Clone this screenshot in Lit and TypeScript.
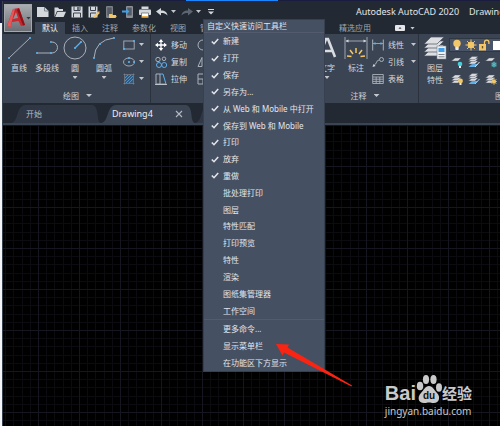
import { LitElement, html, css, svg, nothing } from "lit";
import { customElement, state } from "lit/decorators.js";

const INK = "#d4d7db";
const LINE = "#a9b0ba";
const BLUE = "#5fb0ea";
const GOLD = "#f3c767";

const dot = (x: number, y: number) => svg`<rect x=${x - 0.9} y=${y - 0.9} width="1.8" height="1.8" fill=${BLUE} />`;

const floppy = svg`
  <path d="M0.5 0.5H11.5V11.5H0.5Z" fill=${INK} />
  <path d="M3 0.5V4.5H9V0.5M2.5 11.5V7H9.5V11.5" fill="none" stroke="#3a414c" />
  <path d="M7 1V4" stroke="#3a414c" stroke-width="1.4" />`;

const quickIcons = [
  { name: "新建", art: svg`<path d="M0 1H7.5L11.500 5V11H0Z" fill=${INK} /><path d="M7.500 1V5H11.500" fill="none" stroke="#6d747f" stroke-width=".8" />` },
  { name: "打开", art: svg`<path d="M0.500 11V1.500H4L5.200 3H9V5H3Z" fill=${INK} /><path d="M3.500 5.800H12L9.600 11H1.200Z" fill=${INK} />` },
  { name: "保存", art: floppy },
  { name: "另存为", art: svg`<path d="M0.500 0.500H9.500V11.500H0.500Z" fill=${INK} /><path d="M2.500 .5V4.500H7.500V.5M2.500 11.500V7H8" fill="none" stroke="#3a414c" /><path d="M5 11L10 5.500L11.800 7L7 12Z" fill=${GOLD} /><path d="M10 5.500L11 4.400L12 6L11.600 7Z" fill="#e05a4a" />` },
  { name: "从 Web 和 Mobile 中打开", art: svg`<rect x="1" width="7" height="12" rx="1" fill="#7b8088" /><rect x="2.300" y="1.500" width="4.400" height="8" fill="#555b65" /><path d="M4 12V8H7L8 9H11V10L12 9.800L10.500 12Z" fill=${GOLD} />` },
  { name: "保存到 Web 和 Mobile", art: svg`<rect x="4" width="7" height="12" rx="1" fill="#8b9098" /><rect x="5.300" y="1.500" width="4.400" height="8" fill="#555b65" /><path d="M0 4.500H4V2.500L7.500 5.500L4 8.500V6.500H0Z" fill="#43a0e6" />` },
  { name: "打印", art: svg`<path d="M2.500 0.500H9.500V3H2.500Z" fill=${INK} /><rect y="3.500" width="12" height="5.500" rx=".8" fill=${INK} /><path d="M2.500 7H9.500V11.500H2.500Z" fill="#fff" stroke="#59606b" stroke-width=".7" /><rect x="3" y="10" width="6" height="1.500" fill="#efb44e" />` },
];

const bulb = svg`<circle cx="6" cy="4.400" r="3.700" fill=${GOLD} /><rect x="4.300" y="7.800" width="3.400" height="3.200" rx=".8" fill="#e8eaed" />`;
const sun = svg`<circle cx="6" cy="6" r="3.300" fill=${GOLD} /><path d="M6 0.500V11.500M0.500 6H11.500M2.100 2.100L9.900 9.900M9.900 2.100L2.100 9.900" stroke=${GOLD} stroke-width="1" />`;
const lock = svg`<rect x="0" y="5" width="7" height="6.500" fill=${GOLD} /><path d="M5.500 5V3.300A2.200 2.200 0 0 1 9.900 3.300V5" fill="none" stroke=${GOLD} stroke-width="1.300" /><rect x="2.800" y="7" width="1.400" height="2.400" fill="#6b5422" />`;

const sheet = (y: number) => svg`<path d=${`M4 ${y}H10L7 ${y + 3}H0.500Z`} fill="#d9dbde" stroke="#4a5260" stroke-width=".4" />`;
const stack = svg`${sheet(7)}${sheet(4.5)}${sheet(2)}`;
const layerTools = [
  { name: "关闭图层", art: svg`${sheet(2)}<circle cx="9" cy="8" r="2.300" fill="#45d0dc" /><rect x="8" y="10" width="2" height="2" fill="#e8eaed" />` },
  { name: "置为当前", art: svg`<path d="M4 8H10L7 11H.5Z" fill=${BLUE} />${sheet(5)}${sheet(2.5)}${sheet(0.5)}<path d="M7 11L11.500 6" stroke="#e8eaed" />` },
  { name: "冻结图层", art: svg`${sheet(2)}<circle cx="9" cy="8.500" r="2.600" fill="#3f939c" /><path d="M9 5.500V11.500M6.500 7L11.500 10M11.500 7L6.500 10" stroke="#6fc3c9" stroke-width=".6" />` },
  { name: "打开所有图层", art: svg`${stack}<circle cx="9.500" cy="8" r="2.400" fill=${GOLD} /><rect x="8.500" y="10" width="2" height="2" fill="#e8eaed" />` },
  { name: "匹配图层", art: svg`<path d="M4 8H10L7 11H.5Z" fill=${BLUE} />${sheet(5)}${sheet(2.5)}${sheet(0.5)}<path d="M7 11L11.500 6" stroke="#9ccbf0" />` },
  { name: "解冻所有图层", art: svg`${stack}<circle cx="9" cy="8.500" r="2" fill=${GOLD} /><path d="M9 5V12M5.500 8.500H12M6.500 6L11.500 11M11.500 6L6.500 11" stroke=${GOLD} stroke-width=".7" />` },
];

const drawTools = [
  { name: "直线", drop: false, art: svg`<path d="M2 22L23 2" stroke=${LINE} />${dot(2, 22)}${dot(23, 2)}` },
  { name: "多段线", drop: false, art: svg`<path d="M2 17H17A5.500 5.500 0 0 0 17 6" fill="none" stroke=${LINE} />${dot(2, 17)}${dot(16, 17)}${dot(16, 6)}` },
  { name: "圆", drop: true, art: svg`<circle cx="12" cy="12" r="11" fill="none" stroke=${LINE} /><path d="M12 12L18 6" stroke=${BLUE} stroke-width="1.200" />${dot(12, 12)}${dot(18, 6)}` },
  { name: "圆弧", drop: true, art: svg`<path d="M2 22Q3 4 22 2" fill="none" stroke=${LINE} />${dot(2, 22)}${dot(8, 8)}${dot(22, 2)}` },
];

const shapeTools = [
  { name: "矩形", art: svg`<rect x=".8" y="2" width="10.400" height="8" fill="none" stroke=${LINE} stroke-width=".9" />${dot(1, 10)}${dot(11, 2)}` },
  { name: "椭圆", art: svg`<ellipse cx="6" cy="6" rx="5.500" ry="4" fill="none" stroke=${LINE} stroke-width=".9" />${dot(6, 6)}${dot(6, 2)}${dot(11, 6)}` },
  { name: "图案填充", art: svg`<rect x="2" y="2" width="8" height="8" fill="#33597f" /><path d="M2 5L5 2M2 8L8 2M3 10L10 3M6 10L10 6" stroke="#5c9fd6" stroke-width=".8" /><path d="M0.500 1.500H11.500M.5 10.500H11.500M1.500 .5V11.500M10.500 .5V11.500" stroke="#7d8591" stroke-width=".7" />` },
];

const modifyTools = [
  { name: "移动", art: svg`<path d="M6 1V11M1 6H11" stroke="#fff" stroke-width="1.300" /><path d="M6 0L8.300 3H3.700ZM6 12L8.300 9H3.700ZM0 6L3 3.700V8.300ZM12 6L9 3.700V8.300Z" fill="#fff" />` },
  { name: "复制", art: svg`<g fill="none" stroke-width="1"><circle cx="3" cy="3.500" r="2.200" stroke=${LINE} /><circle cx="9" cy="2.800" r="1.800" stroke=${LINE} /><circle cx="4" cy="9" r="2.500" stroke=${BLUE} /><circle cx="9.200" cy="9" r="2.500" stroke=${BLUE} /></g>` },
  { name: "拉伸", art: svg`<path d="M1 11V1H5V11Z" fill="none" stroke=${LINE} /><path d="M5 1L8 1L11 11H5" fill="none" stroke=${BLUE} /><path d="M0 11.500H12" stroke=${INK} stroke-width=".8" />` },
];

const modifyMore = [
  { name: "旋转", art: svg`<path d="M9 2A5 5 0 1 0 11 6" fill="none" stroke=${LINE} />` },
  { name: "镜像", art: svg`<path d="M1 10.500L5 1.500V10.500ZM11 10.500L7 1.500V10.500Z" fill="none" stroke=${LINE} />` },
  { name: "缩放", art: svg`<path d="M1 1H11V11H1ZM1 6H6V11" fill="none" stroke=${LINE} />` },
];

const noteTools = [
  { name: "线性", drop: true, art: svg`<path d="M.7 .5V11.500M11.300 .5V11.500" stroke=${LINE} /><path d="M1 4.500H11" stroke=${BLUE} />${dot(3, 4.5)}${dot(9, 4.5)}` },
  { name: "引线", drop: true, art: svg`<circle cx="9.500" cy="3.500" r="2" fill="none" stroke=${LINE} /><path d="M7.500 3.800C4 4 5 8 2 9.500" fill="none" stroke=${LINE} /><path d="M0.500 11L1.500 8L3.600 10Z" fill=${INK} />` },
  { name: "表格", drop: false, art: svg`<path d="M.7 1.500H11.300V10.500H.7ZM.7 4H11.300M.7 6.200H11.300M.7 8.400H11.300M4.200 4V10.500M7.800 4V10.500" fill="none" stroke=${LINE} stroke-width=".9" />` },
];

const commands = [
  "新建", "打开", "保存", "另存为...", "从 Web 和 Mobile 中打开", "保存到 Web 和 Mobile", "打印", "放弃", "重做",
  "批处理打印", "图层", "特性匹配", "打印预览", "特性", "渲染", "图纸集管理器", "工作空间",
];
const extras = ["更多命令...", "显示菜单栏", "在功能区下方显示"];
const ribbonTabs = ["默认", "插入", "注释", "参数化", "视图", "管理"];

const icon = (art: unknown, size = 12) => html`<svg class="icon" width=${size} height=${size} viewBox="0 0 ${size} ${size}" aria-hidden="true">${art}</svg>`;
const caret = html`<span class="caret"></span>`;

@customElement("app-root")
export class AppRoot extends LitElement {
  @state() private tab = "默认";
  @state() private checked = new Set(commands.slice(0, 9));

  static styles = css`
    :host {
      display: block;
      position: relative;
      min-height: 100vh;
      overflow: hidden;
      background: linear-gradient(#1b1d40 23px, #f4f5f7 23px);
      color: #d6d9de;
      font: 8px/12px "Noto Sans", "Noto Sans CJK SC", sans-serif;
    }
    * { box-sizing: border-box; }
    button {
      margin: 0;
      padding: 0;
      border: 0;
      background: none;
      color: inherit;
      font: inherit;
      white-space: nowrap;
      flex: none;
    }
    .icon { display: block; flex: none; overflow: visible; }
    .caret {
      flex: none;
      width: 5px;
      height: 3px;
      background: #c3c7cd;
      clip-path: polygon(0 0, 100% 0, 50% 100%);
    }
    .strip { display: flex; justify-content: center; height: 1px; background: #1b1d40; }
    .strip span { width: 92px; margin-right: 36px; background: #1a86ff; }
    .window {
      display: flex;
      flex-direction: column;
      min-height: calc(100vh - 1px);
      margin-left: 2px;
      border-left: 1px solid #38424f;
      background: #3b4453;
    }
    .head { display: grid; grid-template-columns: 32px 1fr; background: #222932; }
    .logo {
      display: flex;
      align-items: center;
      gap: 1px;
      width: 28px;
      height: 28px;
      margin: 3px 0 0 1px;
      padding-left: 2px;
      border: 1px solid #a4a7ab;
      background: linear-gradient(#a9acb0, #6a6e74);
    }
    .logo .caret { background: #333a45; }
    .bars { min-width: 0; }
    .title { display: flex; align-items: center; height: 21px; overflow: hidden; }
    .quick { display: flex; align-items: center; gap: 5px; flex: none; padding-left: 2px; }
    .undo { display: flex; align-items: center; gap: 3px; }
    .more { padding: 0 2px; }
    .name {
      display: flex;
      gap: 10px;
      margin-left: auto;
      flex: none;
      width: 144px;
      color: #e2e4e8;
      font-size: 9px;
      white-space: nowrap;
    }
    .tabs { display: flex; height: 12px; color: #a1a7b0; overflow: hidden; }
    .tabs button { padding: 0 7px; }
    .tabs button.on { background: #3b4453; color: #f0f1f3; }
    .tabs .apps { display: flex; flex: none; width: 168px; margin-left: auto; }
    .tabs .view { display: flex; align-items: center; gap: 5px; padding-left: 17px; }
    .ribbon { display: flex; height: 69px; overflow: hidden; background: #3b4453; }
    .panel {
      display: flex;
      flex-direction: column;
      flex: none;
      border-right: 1px solid #2b323d;
    }
    .tools { display: flex; flex: 1; padding-top: 2px; }
    .caption {
      display: flex;
      align-items: center;
      justify-content: center;
      gap: 7px;
      height: 15px;
      color: #cdd1d7;
    }
    .caption .caret { width: 6px; }
    .draw { width: 148px; padding-left: 2px; }
    .modify { width: 138px; padding-left: 4px; }
    .note { width: 130px; padding-left: 23px; }
    .layers { flex: 1 0 180px; padding-left: 2px; }
    .big {
      display: flex;
      flex-direction: column;
      align-items: center;
      width: 28px;
      height: 50px;
      gap: 2px;
    }
    .big.wide { width: 30px; }
    .big .label { line-height: 12px; text-align: center; }
    .rows { display: grid; grid-template-rows: repeat(3, 17px); }
    .rows button { display: flex; align-items: center; gap: 4px; }
    .shapes { padding-left: 4px; }
    .moves { width: 42px; }
    .dims { padding-left: 2px; }
    .dims .caret { margin-left: 3px; }
    .state {
      display: flex;
      align-items: center;
      gap: 2px;
      height: 14px;
      margin-top: 2px;
      padding-left: 1px;
      border: 1px solid #2f3743;
      background: #4a5468;
    }
    .swatch { width: 60px; height: 9px; background: #fff; }
    .grid { display: grid; grid-template-columns: repeat(3, 12px); gap: 5px; padding: 4px 0 0 2px; }
    .side { flex: 1; min-width: 120px; }
    .docs { display: flex; height: 20px; padding: 2px 0 0 8px; background: #222932; }
    .doc {
      position: relative;
      display: flex;
      align-items: center;
      justify-content: space-between;
      height: 18px;
      width: 90px;
      padding: 0 8px 0 15px;
      color: #b4bac3;
    }
    .doc.on { width: 94px; padding: 0 10px 0 11px; color: #eceef1; font-size: 9px; }
    .doc span, .doc .icon { position: relative; }
    .doc svg.back { position: absolute; inset: 0; width: 100%; height: 100%; }
    .canvas {
      flex: 1;
      border-top: 2px solid #3b4453;
      background-color: #000;
      background-image:
        linear-gradient(90deg, #15161f 1px, transparent 1px),
        linear-gradient(#15161f 1px, transparent 1px),
        linear-gradient(90deg, transparent 8px, #0c0c10 8px 9px, transparent 9px 16px, #0c0c10 16px 17px, transparent 17px 25px, #0c0c10 25px 26px, transparent 26px 33px, #0c0c10 33px 34px, transparent 34px),
        linear-gradient(transparent 8px, #0c0c10 8px 9px, transparent 9px 16px, #0c0c10 16px 17px, transparent 17px 25px, #0c0c10 25px 26px, transparent 26px 33px, #0c0c10 33px 34px, transparent 34px);
      background-size: 41px 41px;
      background-position: 35px 0;
    }
    .menu {
      position: absolute;
      left: 203px;
      top: 19px;
      width: 122px;
      border: 1px solid #36404e;
      background: #465063;
      color: #e3e5e9;
    }
    .menu h2 {
      margin: 0;
      padding-left: 3px;
      border-bottom: 1px solid #525c6e;
      font: inherit;
    }
    .list { display: grid; grid-auto-rows: 1fr; height: 286px; }
    .list.last { height: 52px; border-top: 1px solid #525c6e; }
    .item { display: flex; align-items: center; gap: 4px; padding-left: 7px; text-align: left; }
    .item .mark { width: 8px; height: 7px; flex: none; }
    .arrow { position: absolute; left: 274px; top: 342px; }
    .brand {
      position: absolute;
      right: 28px;
      bottom: 8px;
      color: #c9c9c9;
    }
    .mark-row { display: flex; align-items: flex-end; height: 32px; }
    .bai { font: bold 20px/22px "Liberation Sans", sans-serif; }
    .jing { font: bold 15px/22px "Noto Sans CJK SC", sans-serif; }
    .paw { position: relative; width: 26px; height: 30px; }
    .du {
      position: absolute;
      left: 0;
      right: 0;
      bottom: 2px;
      color: #111;
      font: bold 10px/12px "Liberation Sans", sans-serif;
      text-align: center;
    }
    .brand a { display: block; color: inherit; font-size: 10px; line-height: 14px; text-decoration: none; }
  `;

  private toggle(name: string) {
    const next = new Set(this.checked);
    if (!next.delete(name)) next.add(name);
    this.checked = next;
  }

  private small(t: { name: string; art: unknown; drop?: boolean }) {
    return html`<button>${icon(t.art)}<span>${t.name}</span>${t.drop ? caret : nothing}</button>`;
  }

  private head() {
    return html`
      <header class="head">
        <button class="logo" aria-label="应用程序菜单">
          <svg class="icon" width="18" height="20" viewBox="0 0 18 20" aria-hidden="true">
            <path d="M6 1L12 0L18 17L14 18L11.500 13L5 14L3.500 19L0 18Z" fill="#c9262d" />
            <path d="M9 4L11 10L6 11Z" fill="#8e9196" />
            <path d="M6 1L8 1L3.500 19L0 18Z" fill="#e4585a" />
            <path d="M12 0L18 17L16 17.500L10 2Z" fill="#8d1219" />
          </svg>
          ${caret}
        </button>
        <div class="bars">
          <div class="title">
            <div class="quick">
              ${quickIcons.map((q) => html`<button aria-label=${q.name}>${icon(q.art)}</button>`)}
              <span class="undo">
                <button aria-label="放弃">${icon(svg`<path d="M0 5.500L5 2V4.500C9 4.500 11 6 11.500 9.500C9.500 7.500 8 7 5 7V9.500Z" fill="#d4d7db" />`)}</button>${caret}
              </span>
              <span class="undo">
                <button aria-label="重做">${icon(svg`<path d="M12 5.500L7 2V4.500C3 4.500 1 6 .5 9.500C2.500 7.500 4 7 7 7V9.500Z" fill="#5d6570" />`)}</button>${caret}
              </span>
              <button class="more" aria-label="自定义快速访问工具栏">
                <svg class="icon" width="6" height="6" viewBox="0 0 6 6" aria-hidden="true"><path d="M0 .5H6" stroke="#d4d7db" /><path d="M0 2.500H6L3 5.500Z" fill="#d4d7db" /></svg>
              </button>
            </div>
            <div class="name"><span>Autodesk AutoCAD 2020</span><span>Drawing4.dwg</span></div>
          </div>
          <nav class="tabs">
            ${ribbonTabs.map((t) => html`<button class=${t === this.tab ? "on" : ""} @click=${() => (this.tab = t)}>${t}</button>`)}
            <div class="apps">
              <button>精选应用</button>
              <button class="view" aria-label="最小化功能区">
                <svg class="icon" width="10" height="6" viewBox="0 0 10 6" aria-hidden="true"><rect width="10" height="6" rx="1" fill="#e4e6e9" /><path d="M3.500 3.800L5 2L6.500 3.800Z" fill="#39414d" /></svg>
                ${caret}
              </button>
            </div>
          </nav>
        </div>
      </header>`;
  }

  private ribbon() {
    return html`
      <section class="ribbon">
        <div class="panel draw">
          <div class="tools">
            ${drawTools.map((t) => html`<button class="big ${t.name === "圆弧" ? "wide" : ""}">${icon(t.art, 24)}<span class="label">${t.name}</span>${t.drop ? caret : nothing}</button>`)}
            <div class="rows shapes">${shapeTools.map((t) => html`<button aria-label=${t.name}>${icon(t.art)}${caret}</button>`)}</div>
          </div>
          <div class="caption">绘图${caret}</div>
        </div>
        <div class="panel modify">
          <div class="tools">
            <div class="rows moves">${modifyTools.map((t) => this.small(t))}</div>
            <div class="rows">${modifyMore.map((t) => html`<button aria-label=${t.name}>${icon(t.art)}</button>`)}</div>
          </div>
          <div class="caption"></div>
        </div>
        <div class="panel note">
          <div class="tools">
            <button class="big wide">${icon(svg`<path d="M4 21L11 3H13L20 21M6.500 15H17.500" fill="none" stroke="#d9dce0" stroke-width="2.600" />`, 24)}<span class="label">文字</span>${caret}</button>
            <button class="big">${icon(svg`
              <path d="M1 1V23M23 1V23M2 5H22" fill="none" stroke=${LINE} stroke-width=".9" />
              <path d="M1.500 5L4.500 3.500V6.500ZM22.500 5L19.500 3.500V6.500Z" fill=${INK} />
              <path d="M12 12V17M6 14L9 18M18 14L15 18M3 20L7.500 20.500M21 20L16.500 20.500" stroke=${GOLD} stroke-width="1.500" />`, 24)}<span class="label">标注</span></button>
            <div class="rows dims">${noteTools.map((t) => this.small(t))}</div>
          </div>
          <div class="caption">注释${caret}</div>
        </div>
        <div class="panel layers">
          <div class="tools">
            <button class="big">${icon(svg`
              ${[13, 9, 5, 1].map((y) => svg`<path d=${`M8 ${y}H21L14 ${y + 7}H1Z`} fill="#dcdee1" stroke="#4a5260" stroke-width=".7" />`)}
              <rect x="14" y="10" width="9" height="13" fill="#eef0f2" stroke="#7c838e" stroke-width=".6" />
              <rect x="15.500" y="12" width="6" height="4" fill="#3f9fe8" />
              <path d="M15.500 18.500H21.500M15.500 20.800H21.500" stroke="#6b7480" stroke-width=".9" />`, 24)}<span class="label">图层<br />特性</span></button>
            <div class="side">
              <div class="state">${icon(bulb)}${icon(sun)}${icon(lock)}<span class="swatch"></span></div>
              <div class="grid">${layerTools.map((t) => html`<button aria-label=${t.name}>${icon(t.art)}</button>`)}</div>
            </div>
          </div>
          <div class="caption">图层${caret}</div>
        </div>
      </section>`;
  }

  private docs() {
    const back = (fill: string) => html`<svg class="back" viewBox="0 0 100 18" preserveAspectRatio="none" aria-hidden="true"><path d="M0 18C9 17 5 1 16 0H90C99 1 94 17 100 18Z" fill=${fill} /></svg>`;
    return html`
      <nav class="docs">
        <button class="doc">${back("#303744")}<span>开始</span></button>
        <button class="doc on">${back("#3b4453")}<span>Drawing4</span>${icon(svg`<path d="M3 3L9 9M9 3L3 9" stroke="#b4bac3" stroke-width="1.100" />`)}</button>
        <button class="doc" aria-label="新图形">${back("#303744")}${icon(svg`<path d="M-4 6H2M-1 3V9" stroke="#a5abb5" />`)}</button>
      </nav>`;
  }

  private menu() {
    return html`
      <div class="menu" role="menu">
        <h2>自定义快速访问工具栏</h2>
        <div class="list">
          ${commands.map((c) => html`
            <button class="item" role="menuitemcheckbox" aria-checked=${this.checked.has(c)} @click=${() => this.toggle(c)}>
              <svg class="mark" viewBox="0 0 8 7" aria-hidden="true">${this.checked.has(c) ? svg`<path d="M.8 3.500L3 5.700L7.200 1" fill="none" stroke="#e3e5e9" stroke-width="1.600" />` : nothing}</svg>
              <span>${c}</span>
            </button>`)}
        </div>
        <div class="list last">
          ${extras.map((c) => html`<button class="item" role="menuitem"><span class="mark"></span><span>${c}</span></button>`)}
        </div>
      </div>`;
  }

  render() {
    return html`
      <div class="strip"><span></span></div>
      <main class="window">
        ${this.head()} ${this.ribbon()} ${this.docs()}
        <div class="canvas"></div>
      </main>
      ${this.menu()}
      <svg class="arrow" width="80" height="46" viewBox="0 0 80 46" aria-hidden="true">
        <path d="M2 2L15 2.500L13.500 5.500L78 43.500L77.500 44.500L10 10.500L8.500 13.500Z" fill="#fb2412" />
      </svg>
      <div class="brand">
        <div class="mark-row">
          <span class="bai">Bai</span>
          <span class="paw">
            <svg class="icon" width="26" height="30" viewBox="0 0 26 30" aria-hidden="true">
              <g fill="#c9c9c9">
                <ellipse cx="4" cy="12" rx="3.200" ry="4.300" /><ellipse cx="10" cy="5.500" rx="3.100" ry="4.500" />
                <ellipse cx="17.500" cy="5.500" rx="3.100" ry="4.500" /><ellipse cx="23" cy="13.500" rx="3" ry="4.200" />
                <path d="M13 12C17 12 18 16 21 19C25 23 23 29 18 29C15 29 15 28.500 13 28.500C11 28.500 11 29 8 29C2 29 1 23 5 19C8 16 9 12 13 12Z" />
              </g>
            </svg>
            <span class="du">du</span>
          </span>
          <span class="jing">经验</span>
        </div>
        <a href="https://jingyan.baidu.com">jingyan.baidu.com</a>
      </div>`;
  }
}
